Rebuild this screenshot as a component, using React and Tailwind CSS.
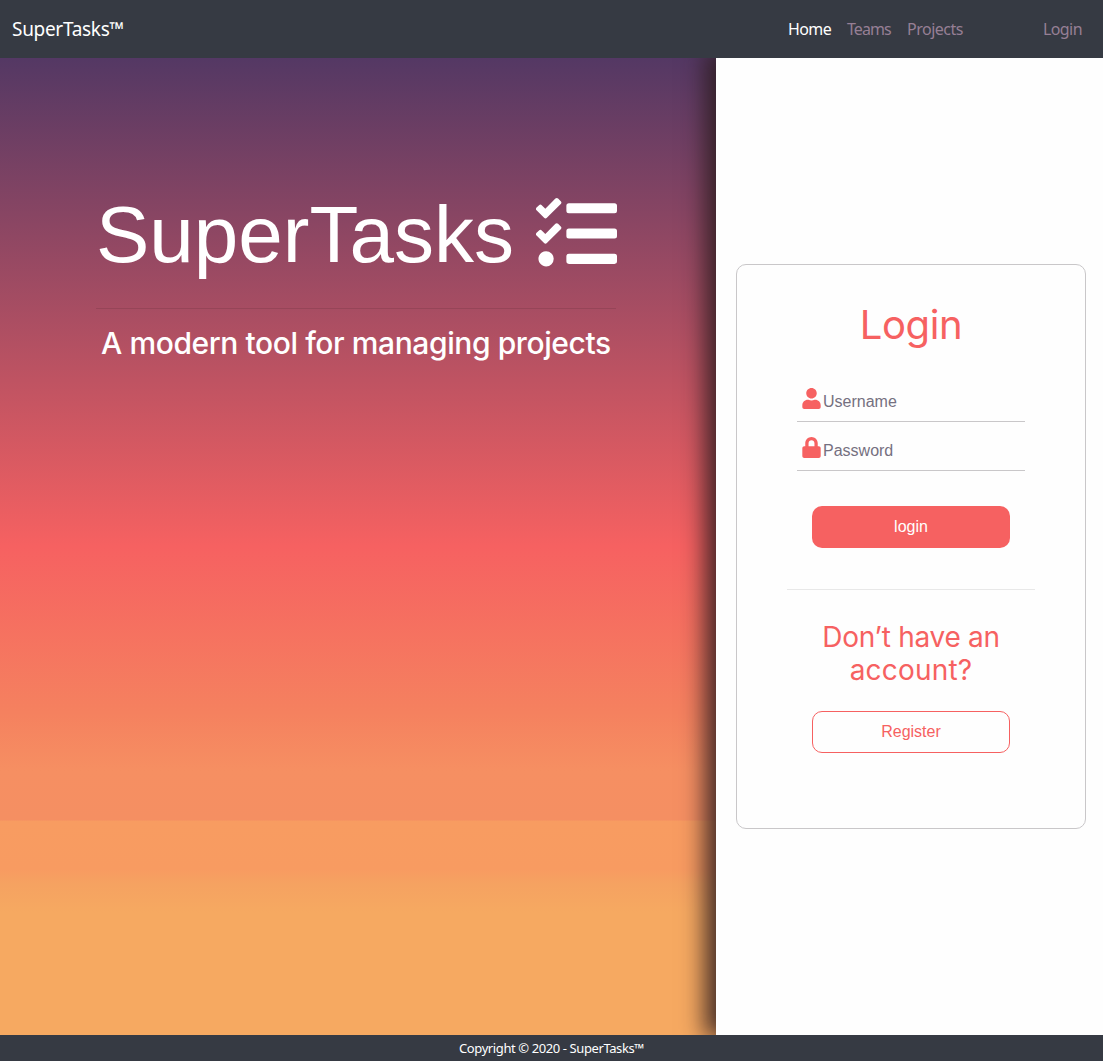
import { FaTasks, FaUser, FaLock } from "react-icons/fa";

function NavBar() {
  return (
    <header className="relative z-10 flex h-[58px] items-center justify-between bg-[#363a43] pl-3 pr-[21px] pb-px font-['Noto_Sans',sans-serif]">
      <a className="text-[19px] leading-7 tracking-[-0.3px] text-white">SuperTasks™</a>
      <nav className="flex items-center text-[16px] leading-6 text-[#967f95]">
        <a className="w-[59px] tracking-[-0.6px] text-white">Home</a>
        <a className="w-[60px] tracking-[-0.95px]">Teams</a>
        <a className="w-[136px] tracking-[-0.5px]">Projects</a>
        <a className="w-[39px] tracking-[-0.6px]">Login</a>
      </nav>
    </header>
  );
}

function Hero() {
  return (
    <section className="w-[716px] bg-[linear-gradient(to_bottom,#543864_0%,#f66161_50%,#f5815f_67%,#f68f62_73%,#f58f62_78%,#f89c61_78.1%,#f89b61_83%,#f5a261_84.5%,#f6a961_87.5%,#f6a961_100%)] pl-[96px] pt-[129px] text-white">
      <div className="w-[520px]">
        <h1 className="flex h-[96px] items-center font-['Liberation_Sans',sans-serif] text-[80px] leading-[96px]">
          <span className="w-[440px] shrink-0 whitespace-nowrap">SuperTasks</span>
          <FaTasks className="mb-1 h-[81px] w-[81px] shrink-0" />
        </h1>
        <hr className="mt-[25px] border-t border-black/10" />
        <p className="mt-[14px] whitespace-nowrap pl-[5px] font-[Inter,sans-serif] text-[30px] font-medium leading-[40px] tracking-[-0.41px]">
          A modern tool for managing projects
        </p>
      </div>
    </section>
  );
}

function Field({ icon: Icon, type, placeholder }) {
  return (
    <label className="mb-2 flex h-[41px] w-[228px] border-b border-[#c9c7c9] pl-[5px]">
      <Icon className="mt-[7px] h-[21px] w-[19px] shrink-0 text-[#f66161]" />
      <input
        type={type}
        placeholder={placeholder}
        className="ml-[2px] h-[40px] min-w-0 flex-1 bg-transparent pt-[2px] text-[16px] outline-none placeholder:text-[#757080]"
      />
    </label>
  );
}

function LoginPanel() {
  return (
    <aside className="flex w-[387px] flex-col bg-[#fefefe] pl-5 pt-[206px] font-['Liberation_Sans',sans-serif] shadow-[-6px_-3px_22px_5px_rgba(45,30,32,0.88)]">
      <div className="flex h-[565px] w-[350px] flex-col items-center rounded-[10px] border border-[#c9c7c9]">
        <h2 className="mt-[36px] font-[Inter,sans-serif] text-[40px] leading-[48px] tracking-[-0.4px] text-[#f66161]">Login</h2>
        <form className="mt-[32px] flex flex-col items-center">
          <Field icon={FaUser} type="text" placeholder="Username" />
          <Field icon={FaLock} type="password" placeholder="Password" />
          <button type="button" className="mt-[27px] h-[42px] w-[198px] rounded-[10px] bg-[#f66161] text-[16px] text-white">
            login
          </button>
        </form>
        <hr className="mt-[41px] w-[248px] border-t border-[#e8e8e8]" />
        <h3 className="mt-[31px] text-center font-[Inter,sans-serif] text-[28px] leading-[33px] text-[#f66161]">
          <span className="tracking-[-0.3px]">Don’t have an</span>
          <br />
          <span className="tracking-[0.2px]">account?</span>
        </h3>
        <button type="button" className="mt-[24px] h-[42px] w-[198px] rounded-[10px] border border-[#f66161] text-[16px] text-[#f66161]">
          Register
        </button>
      </div>
    </aside>
  );
}

export default function App() {
  return (
    <div className="flex h-[1061px] w-[1103px] flex-col overflow-hidden bg-white">
      <NavBar />
      <main className="flex h-[977px] overflow-hidden">
        <Hero />
        <LoginPanel />
      </main>
      <footer className="flex h-[26px] items-center justify-center bg-[#363a43] pt-px font-['Noto_Sans',sans-serif] text-[13px] tracking-[-0.4px] text-white">
        Copyright © 2020 - SuperTasks™
      </footer>
    </div>
  );
}
